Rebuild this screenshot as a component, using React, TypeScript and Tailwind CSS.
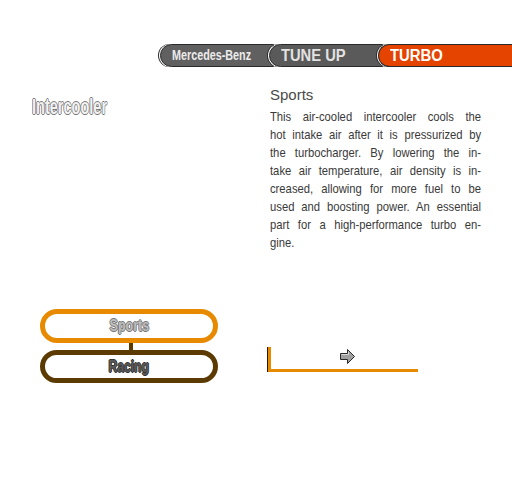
const lines = [
  "This air-cooled intercooler cools the",
  "hot intake air after it is pressurized by",
  "the turbocharger. By lowering the in-",
  "take air temperature, air density is in-",
  "creased, allowing for more fuel to be",
  "used and boosting power. An essential",
  "part for a high-performance turbo en-",
];

const Tab = ({ children, className }: { children: React.ReactNode; className: string }) => (
  <div
    className={`flex h-[23px] items-center rounded-l-[12px] border border-[#2a2a2a] shadow-[-1px_0_0_#ffffff,-2px_0_0_#2a2a2a] ${className}`}
  >
    {children}
  </div>
);

const Arrow = () => (
  <svg width="17" height="17" viewBox="0 0 17 17">
    <path d="M1.5 5.5 H8.5 V1.5 L15.5 8.5 L8.5 15.5 V11.5 H1.5 Z" fill="#a0a0a0" stroke="#2a2a2a" strokeWidth="1" />
    <path d="M2.5 6.5 H9.5 V3.5" fill="none" stroke="#d8d8d8" strokeWidth="1" />
  </svg>
);

const outline = (c: string) =>
  c === "dark"
    ? "[text-shadow:1px_0_0_#333,-1px_0_0_#333,0_1px_0_#333,0_-1px_0_#333]"
    : "[text-shadow:1px_0_0_#777,-1px_0_0_#777,0_1px_0_#777,0_-1px_0_#777]";

export default function App() {
  return (
    <div className="h-[504px] w-[512px] overflow-hidden bg-white font-['Liberation_Sans',Arial,sans-serif]">
      <div className="flex pl-[160px] pt-[44px]">
        <Tab className="w-[114px] bg-[#606060] pl-[11px]">
          <span className="inline-block origin-left scale-x-[0.77] whitespace-nowrap text-[14px] font-bold text-[#ececec]">
            Mercedes-Benz
          </span>
        </Tab>
        <Tab className="-ml-[5px] w-[114px] bg-[#5a5a5a] pl-[11px]">
          <span className="inline-block origin-left scale-x-[0.92] whitespace-nowrap text-[16px] font-bold text-[#e2e2e2]">
            TUNE UP
          </span>
        </Tab>
        <Tab className="-ml-[5px] flex-1 border-r-0 bg-[#e54400] pl-[11px]">
          <span className="inline-block origin-left scale-x-[0.93] text-[16px] font-bold text-white">TURBO</span>
        </Tab>
      </div>

      <div className="flex">
        <div className="w-[270px] pl-[32px]">
          <div
            className={`mt-[26px] inline-block origin-left scale-x-[0.66] whitespace-nowrap text-[22px] font-bold leading-[28px] text-[#f2f2f2] ${outline("light")}`}
          >
            Intercooler
          </div>

          <div className="ml-[8px] mt-[188px] w-[178px]">
            <div className="flex h-[34px] items-center justify-center rounded-full border-[5px] border-[#e88a00] bg-white">
              <span className={`inline-block scale-x-[0.78] text-[16px] font-bold text-[#bdbdbd] ${outline("light")}`}>
                Sports
              </span>
            </div>
            <div className="ml-[89px] h-[7px] w-[4px] bg-[#5a3a00]" />
            <div className="flex h-[33px] items-center justify-center rounded-full border-[5px] border-[#5c3b02] bg-white">
              <span className={`inline-block scale-x-[0.76] text-[16px] font-bold text-[#5a5a5a] ${outline("dark")}`}>
                Racing
              </span>
            </div>
          </div>
        </div>

        <div className="w-[211px] pt-[19px]">
          <div className="text-[15px] leading-[17px] text-[#4a4a4a]">Sports</div>
          <div className="mt-[5px] w-[244px] origin-left scale-x-[0.865] text-[13px] leading-[18px] text-[#3a3a3a]">
            {lines.map((l) => (
              <div key={l} className="whitespace-nowrap text-justify [text-align-last:justify]">
                {l}
              </div>
            ))}
            <div>gine.</div>
          </div>

          <div className="-ml-[2px] mt-[95px] flex h-[25px] w-[150px] items-start justify-center border-b-[3px] border-l-[3px] border-b-[#e88a00] border-l-[#e88a00] shadow-[-1px_0_0_#2a1a00]">
            <div className="ml-[6px] mt-[1px]">
              <Arrow />
            </div>
          </div>
        </div>
      </div>
    </div>
  );
}
